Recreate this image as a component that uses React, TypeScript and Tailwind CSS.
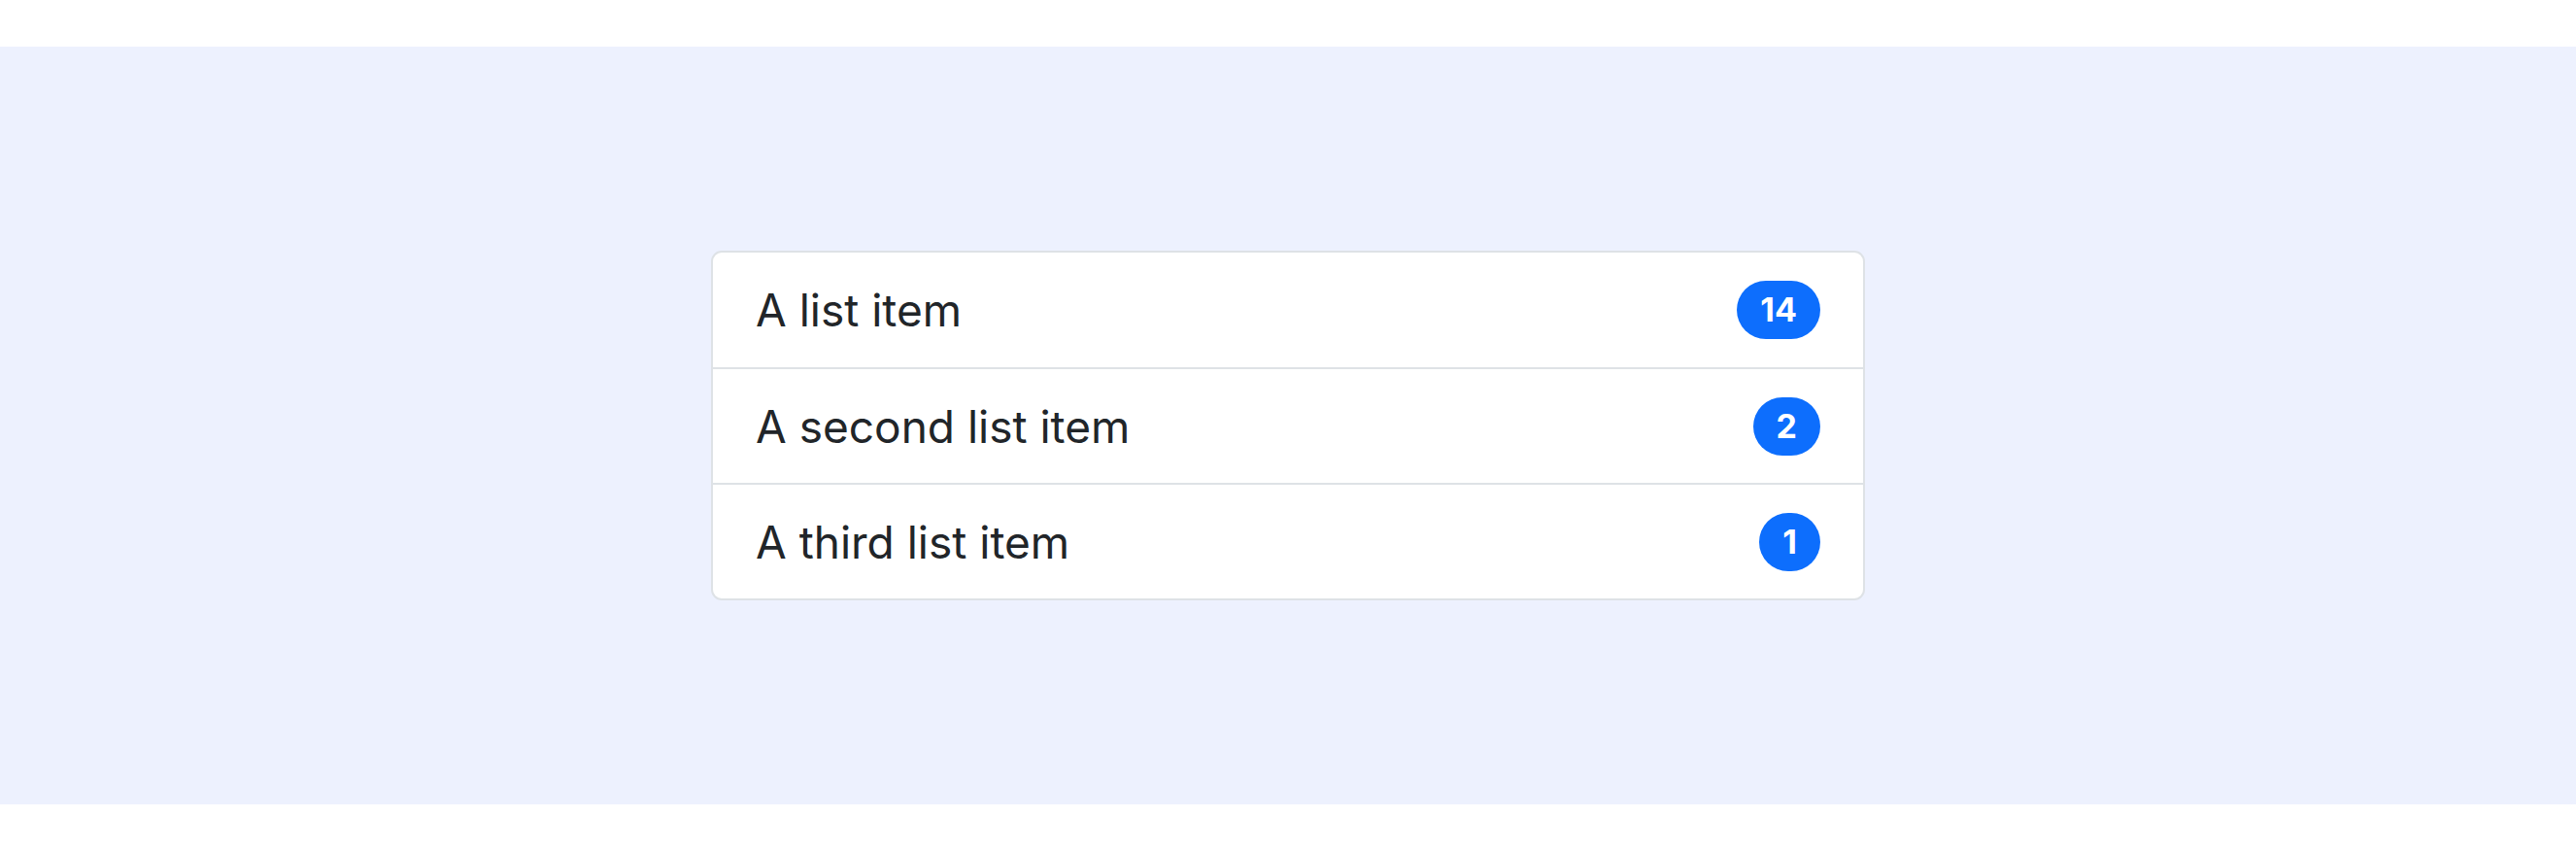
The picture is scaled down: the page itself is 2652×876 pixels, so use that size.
const items = [
  { label: 'A list item', count: 14 },
  { label: 'A second list item', count: 2 },
  { label: 'A third list item', count: 1 }
];

export default function App() {
  return (
    <div className="bg-white py-[48px] font-['Inter','Liberation_Sans',sans-serif]">
      <div className="flex h-[780px] items-center justify-center bg-[#edf1fe]">
        <ul className="w-[1188px] overflow-hidden rounded-[11px] border-2 border-[#dee2e6] bg-white">
          {items.map((item, i) => (
            <li
              key={item.label}
              className={
                'flex items-center justify-between px-[44px] ' +
                (i > 0 ? 'h-[119px] border-t-2 border-[#dee2e6]' : 'h-[118px]')
              }
            >
              <span className="text-[46px] leading-none text-[#212529]">{item.label}</span>
              <span className="rounded-full bg-[#0d6efd] px-[24px] py-[13px] text-[34px] font-bold leading-none text-white">
                {item.count}
              </span>
            </li>
          ))}
        </ul>
      </div>
    </div>
  );
}
